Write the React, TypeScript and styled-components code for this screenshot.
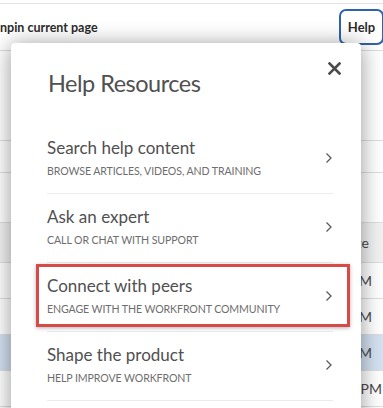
import React from "react";
import styled, { createGlobalStyle } from "styled-components";

const GlobalStyle = createGlobalStyle`
  html, body {
    margin: 0;
    padding: 0;
    background: #ffffff;
  }
  body {
    font-family: Lato, "Open Sans", sans-serif;
    overflow: hidden;
  }
`;

const Page = styled.div`
  position: relative;
  width: 383px;
  height: 408px;
  overflow: hidden;
  background: #ffffff;
`;

const TopStrip = styled.div`
  height: 3px;
  border-bottom: 1px solid #e2e2e2;
`;

const Header = styled.header`
  display: flex;
  align-items: center;
  justify-content: space-between;
  height: 46px;
  border-bottom: 1px solid #dcdcdc;
`;

const PageLabel = styled.span`
  font-size: 12.5px;
  font-weight: 700;
  color: #2c2c2c;
`;

const HelpButton = styled.button`
  height: 36px;
  width: 45px;
  margin-right: -1px;
  border: 2px solid #2e63ad;
  border-radius: 7px;
  background: #ffffff;
  font-family: Lato, sans-serif;
  font-size: 13px;
  font-weight: 700;
  color: #2c2c2c;
  padding: 0;
`;

const Row = styled.div<{ $h: number; $bg?: string }>`
  display: flex;
  align-items: center;
  justify-content: flex-end;
  height: ${(p) => p.$h}px;
  background: ${(p) => p.$bg || "#ffffff"};
  border-bottom: 1px solid #dedede;
`;

const Cell = styled.span<{ $pad: number }>`
  padding-right: ${(p) => p.$pad}px;
  font-size: 14px;
  color: #4a4a4a;
`;

const Modal = styled.div`
  position: absolute;
  left: 11px;
  top: 43px;
  width: 350px;
  height: 420px;
  box-sizing: border-box;
  padding: 25px 28px 0 36px;
  background: #ffffff;
  border-radius: 4px 4px 0 0;
  box-shadow: 0 2px 22px rgba(0, 0, 0, 0.42);
`;

const CloseButton = styled.button`
  position: absolute;
  top: 14px;
  right: 16px;
  width: 22px;
  height: 22px;
  padding: 0;
  border: none;
  background: transparent;
  display: flex;
  align-items: center;
  justify-content: center;
`;

const Title = styled.h2`
  margin: 0 0 0 1px;
  font-size: 23.5px;
  line-height: 30px;
  font-weight: 400;
  letter-spacing: -0.5px;
  color: #505050;
`;

const List = styled.div`
  margin-top: 27px;
  display: flex;
  flex-direction: column;
`;

const Item = styled.div<{ $highlight?: boolean }>`
  position: relative;
  display: flex;
  align-items: center;
  padding: 13px 0 15px;
  border-bottom: 1px solid #ebebeb;

  &::after {
    content: "";
    display: ${(p) => (p.$highlight ? "block" : "none")};
    position: absolute;
    top: 1px;
    left: -11px;
    right: -17px;
    bottom: 4px;
    border: 3px solid #d64a47;
    box-shadow: 0 1px 4px rgba(0, 0, 0, 0.3);
  }
`;

const ItemText = styled.div`
  flex: 1;
  display: flex;
  flex-direction: column;
  gap: 6px;
`;

const ItemTitle = styled.span`
  font-size: 17px;
  line-height: 20px;
  color: #505050;
`;

const ItemSub = styled.span`
  font-size: 10.6px;
  line-height: 14px;
  letter-spacing: -0.1px;
  color: #6e6e6e;
  text-transform: uppercase;
`;

const Chevron = () => (
  <svg width="8" height="12" viewBox="0 0 8 12">
    <polyline points="1.5,1.5 6,6 1.5,10.5" fill="none" stroke="#5a5a5a" strokeWidth="1.3" />
  </svg>
);

const CloseIcon = () => (
  <svg width="13" height="13" viewBox="0 0 13 13">
    <path d="M1.5 1.5 L11.5 11.5 M11.5 1.5 L1.5 11.5" stroke="#4b4b4b" strokeWidth="2.6" strokeLinecap="square" />
  </svg>
);

const resources = [
  { title: "Search help content", sub: "Browse articles, videos, and training" },
  { title: "Ask an expert", sub: "Call or chat with support" },
  { title: "Connect with peers", sub: "Engage with the Workfront community", highlight: true },
  { title: "Shape the product", sub: "Help improve Workfront" },
];

export default function App() {
  return (
    <>
      <GlobalStyle />
      <Page>
        <TopStrip />
        <Header>
          <PageLabel>npin current page</PageLabel>
          <HelpButton>Help</HelpButton>
        </Header>
        <Row $h={89} />
        <Row $h={31} />
        <Row $h={49} />
        <Row $h={39} $bg="#f2f2f2">
          <Cell $pad={14}>Date</Cell>
        </Row>
        <Row $h={35}>
          <Cell $pad={11}>10:15 AM</Cell>
        </Row>
        <Row $h={35}>
          <Cell $pad={11}>11:02 AM</Cell>
        </Row>
        <Row $h={35} $bg="#d3e1f1">
          <Cell $pad={11}>09:48 AM</Cell>
        </Row>
        <Row $h={35}>
          <Cell $pad={1}>12:30 PM</Cell>
        </Row>

        <Modal>
          <CloseButton aria-label="Close">
            <CloseIcon />
          </CloseButton>
          <Title>Help Resources</Title>
          <List>
            {resources.map((r) => (
              <Item key={r.title} $highlight={r.highlight}>
                <ItemText>
                  <ItemTitle>{r.title}</ItemTitle>
                  <ItemSub>{r.sub}</ItemSub>
                </ItemText>
                <Chevron />
              </Item>
            ))}
          </List>
        </Modal>
      </Page>
    </>
  );
}
